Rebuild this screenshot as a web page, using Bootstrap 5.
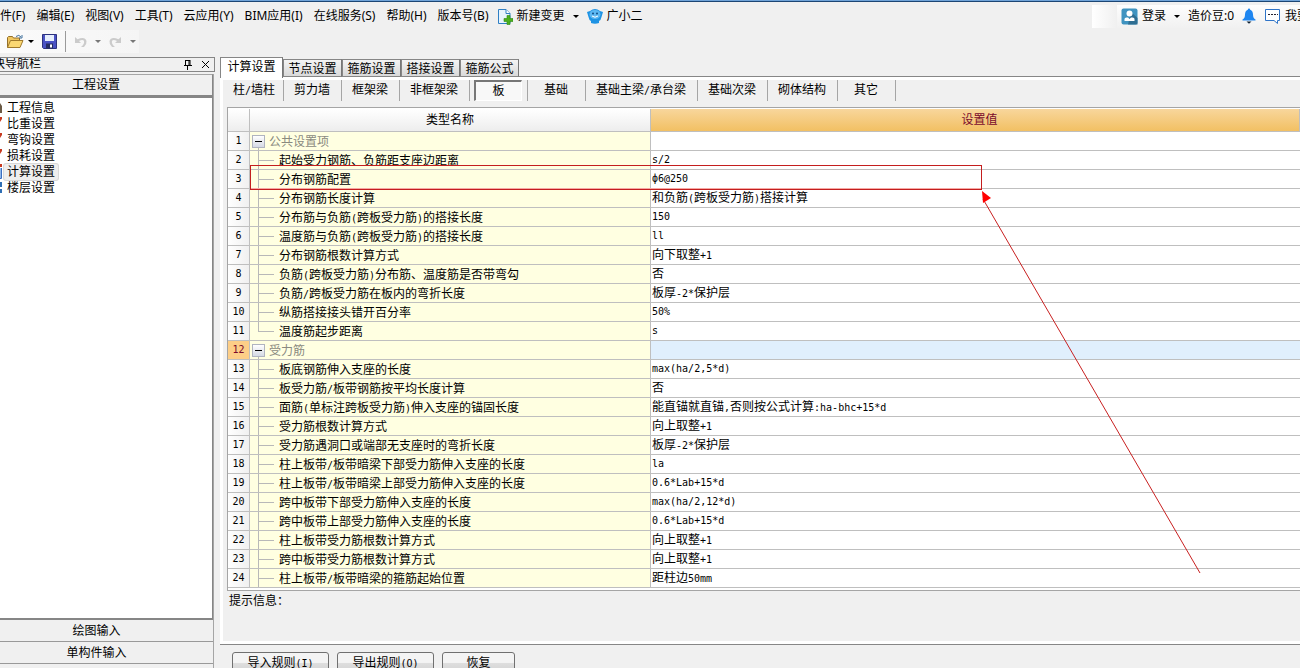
<!DOCTYPE html>
<html lang="zh-CN">
<head>
<meta charset="utf-8">
<meta name="viewport" content="width=device-width, initial-scale=1">
<title>计算设置</title>
<link href="https://cdn.jsdelivr.net/npm/bootstrap@5.3.0/dist/css/bootstrap.min.css" rel="stylesheet">
<style>
:root{--face:#f0f0f0;--line:#bfbfbf;--edge:#868686}
body{background:var(--face);color:#000;font:12px/18px "Liberation Sans","Noto Sans CJK SC",sans-serif;height:100vh;overflow:hidden}
button,.btn{font:inherit;color:inherit;border-radius:0}
.mo{font-family:"DejaVu Sans Mono",monospace;font-size:10px}
span.mo{line-height:0}
.top-strip{height:2px;background:#6fa3d8;border-bottom:1px solid #1c4674}
/* menu */
.menu-bar{height:28px;font-family:"Noto Sans","Noto Sans CJK SC",sans-serif}
.menu-bar a,.menu-bar button{color:#000;text-decoration:none;white-space:nowrap;background:none;border:0;padding:0}
.menu-items{gap:11px;margin-left:-12px}
.account{width:208px;height:23px;gap:4px;background:linear-gradient(#fdfdfd,#f1f1f1)}
.account-blank{width:25px;height:23px;background:linear-gradient(90deg,#fff,var(--face))}
.tri{display:inline-block;border:3px solid transparent;border-top-color:currentColor;border-bottom:0}
/* tool bar */
.tool-bar{height:23px;width:139px;padding-left:7px;background:linear-gradient(90deg,#fbfbfb,#f5f5f5)}
.tool-bar button{background:none;border:0;padding:0;line-height:0}
.tool-sep{width:1px;height:21px;background:#9a9a9a}
.off{color:#777}
/* navigation */
.side{width:220px;padding-right:5px}
.side-title{height:15px;margin-bottom:2px;border:1px solid var(--edge);border-left:0}
.side-title .caption{margin-left:-19px;line-height:13px}
.side-title button{background:none;border:0;padding:0;line-height:0}
.side-body{border-right:1px solid #a5a5a5;margin-right:1px}
.side-head{height:23px;background:var(--face);border:0;border-top:1px solid #a5a5a5;border-bottom:2px solid var(--edge);border-right:1px solid var(--edge);padding:0 20px 0 0}
.side-foot{height:22px;background:var(--face);border:0;border-bottom:1px solid #999;padding:0 20px 0 0}
.side-list{background:#fff;border:1px solid var(--edge);border-left:0;border-bottom-width:2px;padding-top:2px}
.side-list a{display:flex;align-items:center;height:16px;color:#000;text-decoration:none}
.side-list a span{padding:0 3px;line-height:16px}
.side-list a.current span{background:#eee;box-shadow:0 0 0 1px #d9d9d9;border-radius:2px}
.side-list svg{width:4px;height:16px}
/* tab page */
.page-tabs{padding-top:2px}
.page-tabs button{width:59px;height:18px;padding:0;background:linear-gradient(#f4f4f4,#d9d9d9);border:1px solid var(--edge);border-right-color:#777}
.page-tabs button.active{width:63px;height:21px;margin-top:-2px;margin-bottom:-2px;background:#fff;border-bottom:0;padding-bottom:2px;position:relative;z-index:1}
.page-tabs .rest{border-bottom:1px solid var(--edge)}
.page-body{border:3px solid #fff;border-right:0;background:var(--face);box-shadow:-1px 0 var(--edge),0 1px var(--edge)}
.kinds{padding:0 0 6px 3px}
.kinds>div{width:58px;height:21px;border-right:1px solid #a5a5a5;padding-right:1px}
.kinds>div.w70{width:70px}.kinds>div.w112{width:112px}
.kinds button{background:none;border:0;padding:0;white-space:nowrap;width:100%;height:21px;line-height:21px}
.kinds button.active{width:48px;height:21px;line-height:19px;margin:0 auto;border:1px solid #fff;border-top:2px solid #777;border-left:2px solid #777;background:#f8f8f8;display:block}
.sheet{border:1px solid #a5a5a5;border-right:0;margin-left:4px;padding:1px 0 2px;background:#fff}
.settings-table{border-collapse:separate;border-spacing:0;table-layout:fixed;color:#000;margin:0}
.settings-table th,.settings-table td{height:19px;padding:0;line-height:18px;font-weight:400;border:0;border-bottom:1px solid var(--line);border-right:1px solid var(--line);white-space:nowrap;vertical-align:top;box-shadow:none;overflow:hidden}
.settings-table thead th{height:23px;line-height:22px;text-align:center;background:linear-gradient(#fff,#ededed)}
.settings-table thead th.hot{background:linear-gradient(#f8d69c,#f2c063);color:#7a0a2c;padding-left:9px}
.settings-table tbody th{text-align:center;background:linear-gradient(90deg,#fff,#f0f0f0)}
.settings-table tbody .sel th{background:#fdce87;color:#7a0a2c}
.settings-table td{background:#fff;padding-left:1px;border-right:0}
.settings-table .sel td{background:#e0effd}
.settings-table td.leaf,.settings-table td.grp{border-right:1px solid var(--line);padding-top:2px;line-height:16px}
.settings-table td.leaf{padding-left:29px;background:linear-gradient(#b8b8b8,#b8b8b8) 8px 9px/16px 1px no-repeat,linear-gradient(#b8b8b8,#b8b8b8) 8px 0/1px 18px no-repeat,#ffffe1}
.settings-table td.leaf.end{background:linear-gradient(#b8b8b8,#b8b8b8) 8px 9px/16px 1px no-repeat,linear-gradient(#b8b8b8,#b8b8b8) 8px 0/1px 9px no-repeat,#ffffe1}
.settings-table td.grp{padding-left:2px;color:#8a8a80;background:linear-gradient(#b8b8b8,#b8b8b8) 8px 15px/1px 3px no-repeat,#ffffe1}
.fold{width:13px;height:13px;padding:0;border:1px solid #b0b4c0;background:linear-gradient(#000,#000) 2px 5px/7px 1px no-repeat,linear-gradient(#fff,#d5d9e4);vertical-align:top;margin:1px 4px 0 0}
/* markup laid over the table */
.note{position:absolute;left:27px;top:58px;pointer-events:none}
.hint{padding:1px 6px}
.actions{height:24px;gap:8px;padding:8px 12px 0;overflow:hidden}
.actions button{height:23px;width:97px;flex:none;padding:0;border:1px solid #707070;border-radius:3px;background:linear-gradient(#f4f4f4 0 45%,#dedede 50%,#d0d0d0);line-height:21px}
.actions button.short{width:73px}
</style>
</head>
<body class="d-flex flex-column">
<div class="top-strip flex-shrink-0"></div>
<nav class="menu-bar d-flex align-items-center flex-shrink-0" aria-label="菜单">
  <div class="menu-items d-flex align-items-center">
    <a href="#">文件(F)</a><a href="#">编辑(E)</a><a href="#">视图(V)</a><a href="#">工具(T)</a><a href="#">云应用(Y)</a><a href="#">BIM应用(I)</a><a href="#">在线服务(S)</a><a href="#">帮助(H)</a><a href="#">版本号(B)</a>
  </div>
  <button type="button" class="d-flex align-items-center ms-2">
    <svg width="16" height="17" viewBox="0 0 16 17"><path d="M1.5 1.5h7.500l4 4v10h-11.500z" fill="#e8f4fd" stroke="#2f7fc4"/><path d="M9 1.500v4h4" fill="#fff" stroke="#2f7fc4"/><path d="M9 8h3v3h3v3h-3v3h-3v-3h-3v-3h3z" fill="#4caf1e" stroke="#2c8a12" stroke-width=".6" transform="translate(1 -.5)"/></svg>
    <span class="ms-1">新建变更</span><i class="tri ms-2"></i>
  </button>
  <a href="#" class="d-flex align-items-center ms-2">
    <svg width="16" height="16" viewBox="0 0 16 16"><path d="M3 3q5-4 10 0l3 1-1.500 5q-.5 3-2.500 4v2q-4 1.500-8 0v-2q-2-1-2.500-4L0 4z" fill="#1e93e4"/><ellipse cx="8" cy="6.500" rx="5.500" ry="4.500" fill="#5db8f2"/><circle cx="6" cy="5.500" r="1" fill="#114d86"/><circle cx="10" cy="5.500" r="1" fill="#114d86"/><path d="M5 8q3 2.500 6 0" stroke="#fff" fill="none"/></svg>
    <span class="ms-1">广小二</span>
  </a>
  <div class="account d-flex align-items-center ms-auto overflow-hidden">
    <span class="account-blank flex-shrink-0"></span>
    <button type="button" class="d-flex align-items-center flex-shrink-0">
      <svg width="17" height="17" viewBox="0 0 17 17"><rect x=".5" y=".5" width="16" height="16" rx="2" fill="#3f93c0"/><path d="M10 4l6.500 6v6.500H7z" fill="#2f6e92"/><circle cx="8.500" cy="5.500" r="3" fill="#fff"/><path d="M3.500 13V11q0-1.500 2-1.500h1.500l1.500 1.500 1.500-1.500h1.500q2 0 2 1.500v2z" fill="#fff"/></svg>
      <span class="ms-1">登录</span><i class="tri ms-2"></i>
    </button>
    <a href="#" class="ms-1">造价豆:0</a>
    <a href="#" class="mx-1 flex-shrink-0 lh-1" aria-label="通知"><svg width="14" height="16" viewBox="0 0 14 16"><path d="M7 .5q1 0 1.200 1.200Q11 3 11 6.500q0 4 2.500 5v1H.5v-1q2.500-1 2.500-5Q3 3 5.800 1.700 6 .5 7 .5z" fill="#1e86f0"/><path d="M4.500 13.500h5L7 15.800z" fill="#123"/></svg></a>
    <a href="#" class="d-flex align-items-center flex-shrink-0"><svg width="17" height="17" viewBox="0 0 17 17"><path d="M1.500 1.500h14v11h-2v3l-3.500-3h-8.500z" fill="#fff" stroke="#2f74c8"/><path d="M4 6.500h10" stroke="#223" stroke-dasharray="2 1"/></svg><span class="ms-1">我要</span></a>
  </div>
</nav>
<div class="tool-bar d-flex align-items-center flex-shrink-0">
  <button type="button" class="d-flex align-items-center" aria-label="打开">
    <svg width="17" height="15" viewBox="0 0 17 15"><path d="M.5 13.500v-10l1-1h4l1 1.500h6v3" fill="#f0c660" stroke="#94702a"/><path d="M.5 13.500l3-7h12.500l-3 7z" fill="#fbd873" stroke="#a07a2c"/><path d="M9 2.500q3-2.500 5 .5m1-2v3h-3" fill="none" stroke="#41709c"/></svg>
    <i class="tri ms-1 me-2"></i>
  </button>
  <button type="button" aria-label="保存"><svg width="15" height="15" viewBox="0 0 15 15"><path d="M.5.500h14v14h-13l-1-1z" fill="#4a52c4" stroke="#2c327e"/><path d="M3 1h9v6H3z" fill="#e6eefc"/><path d="M4 9.500h7v5H4z" fill="#252c60"/><path d="M8 10.500h2v3H8z" fill="#fff"/></svg></button>
  <span class="tool-sep ms-2 me-2"></span>
  <button type="button" class="d-flex align-items-center off" aria-label="撤销"><svg width="13" height="12" viewBox="0 0 13 12"><path d="M1 1v6h6L5 5q4-2 5 0 .8 3-3 6h3q3-3 2.500-6Q11 0 3.500 3.200z" fill="#cbcbcb"/></svg><i class="tri ms-2"></i></button>
  <button type="button" class="d-flex align-items-center off ms-2" aria-label="重做"><svg width="13" height="12" viewBox="0 0 13 12"><path d="M12 1v6H6l2-2Q4 3 3 5q-.8 3 3 6H3Q0 8 .5 5 2 0 9.500 3.200z" fill="#cbcbcb"/></svg><i class="tri ms-2"></i></button>
</div>

<div class="d-flex flex-grow-1 overflow-hidden pt-1">
  <aside class="side d-flex flex-column flex-shrink-0">
    <div class="side-title d-flex align-items-center overflow-hidden flex-shrink-0">
      <span class="caption me-auto">模块导航栏</span>
      <button type="button" class="me-2" aria-label="固定"><svg width="11" height="11" viewBox="0 0 11 11"><path d="M3.500 1v5M3 1.500h5M7 1v5M8 1v5M2 6.500h8M5.500 7v4" stroke="#000" fill="none"/></svg></button>
      <button type="button" class="me-1" aria-label="关闭"><svg width="9" height="9" viewBox="0 0 9 9"><path d="M1 1l7 7M8 1L1 8" stroke="#000" fill="none"/></svg></button>
    </div>
    <div class="side-body d-flex flex-column flex-grow-1">
      <button type="button" class="side-head">工程设置</button>
      <nav class="side-list flex-grow-1" aria-label="工程设置">
        <a href="#"><svg viewBox="0 0 4 16"><path d="M0 3l2 3v7H0z" fill="#6b5a45"/></svg><span>工程信息</span></a>
        <a href="#"><svg viewBox="0 0 4 16"><path d="M0 1h2v2L0 6z" fill="#c63a20"/></svg><span>比重设置</span></a>
        <a href="#"><svg viewBox="0 0 4 16"><path d="M0 1h2v2L0 6z" fill="#c63a20"/></svg><span>弯钩设置</span></a>
        <a href="#"><svg viewBox="0 0 4 16"><path d="M0 1h2v2L0 6z" fill="#c63a20"/></svg><span>损耗设置</span></a>
        <a href="#" class="current"><svg viewBox="0 0 4 16"><path d="M0 4h2v10H0z" fill="#8fb7ea"/><path d="M0 0h2v3H0z" fill="#c63a20"/><path d="M1.500 4v10.500H0" stroke="#3b6fc0" fill="none"/></svg><span>计算设置</span></a>
        <a href="#"><svg viewBox="0 0 4 16"><path d="M0 2h2v5H0zM0 9h2v4H0z" fill="#2f6fb4"/></svg><span>楼层设置</span></a>
      </nav>
      <button type="button" class="side-foot">绘图输入</button>
      <button type="button" class="side-foot">单构件输入</button>
      <div class="pt-1"></div>
    </div>
  </aside>

  <main class="flex-grow-1 d-flex flex-column overflow-hidden">
    <div class="page-tabs d-flex flex-shrink-0" role="tablist">
      <button type="button" role="tab" class="active">计算设置</button><button type="button" role="tab">节点设置</button><button type="button" role="tab">箍筋设置</button><button type="button" role="tab">搭接设置</button><button type="button" role="tab">箍筋公式</button><span class="rest flex-grow-1"></span>
    </div>
    <section class="page-body flex-grow-1 d-flex flex-column">
      <div class="kinds d-flex text-center">
        <div><button type="button">柱<span class="mo">/</span>墙柱</button></div><div><button type="button">剪力墙</button></div><div><button type="button">框架梁</button></div><div class="w70"><button type="button">非框架梁</button></div><div><button type="button" class="active">板</button></div><div><button type="button">基础</button></div><div class="w112"><button type="button">基础主梁<span class="mo">/</span>承台梁</button></div><div class="w70"><button type="button">基础次梁</button></div><div class="w70"><button type="button">砌体结构</button></div><div><button type="button">其它</button></div>
      </div>
      <div class="position-relative">
      <div class="sheet">
      <table class="table settings-table w-100">
        <colgroup><col style="width:22px"><col style="width:401px"><col></colgroup>
        <thead><tr><th></th><th scope="col">类型名称</th><th scope="col" class="hot">设置值</th></tr></thead>
        <tbody>
        <tr><th class="mo">1</th><td class="grp"><button type="button" class="fold" aria-label="折叠"></button>公共设置项</td><td></td></tr>
        <tr><th class="mo">2</th><td class="leaf">起始受力钢筋、负筋距支座边距离</td><td class="mo">s/2</td></tr>
        <tr><th class="mo">3</th><td class="leaf">分布钢筋配置</td><td class="mo">ф6@250</td></tr>
        <tr><th class="mo">4</th><td class="leaf">分布钢筋长度计算</td><td>和负筋<span class="mo">(</span>跨板受力筋<span class="mo">)</span>搭接计算</td></tr>
        <tr><th class="mo">5</th><td class="leaf">分布筋与负筋<span class="mo">(</span>跨板受力筋<span class="mo">)</span>的搭接长度</td><td class="mo">150</td></tr>
        <tr><th class="mo">6</th><td class="leaf">温度筋与负筋<span class="mo">(</span>跨板受力筋<span class="mo">)</span>的搭接长度</td><td class="mo">ll</td></tr>
        <tr><th class="mo">7</th><td class="leaf">分布钢筋根数计算方式</td><td>向下取整<span class="mo">+1</span></td></tr>
        <tr><th class="mo">8</th><td class="leaf">负筋<span class="mo">(</span>跨板受力筋<span class="mo">)</span>分布筋、温度筋是否带弯勾</td><td>否</td></tr>
        <tr><th class="mo">9</th><td class="leaf">负筋<span class="mo">/</span>跨板受力筋在板内的弯折长度</td><td>板厚<span class="mo">-2*</span>保护层</td></tr>
        <tr><th class="mo">10</th><td class="leaf">纵筋搭接接头错开百分率</td><td class="mo">50%</td></tr>
        <tr><th class="mo">11</th><td class="leaf end">温度筋起步距离</td><td class="mo">s</td></tr>
        <tr class="sel"><th class="mo">12</th><td class="grp"><button type="button" class="fold" aria-label="折叠"></button>受力筋</td><td></td></tr>
        <tr><th class="mo">13</th><td class="leaf">板底钢筋伸入支座的长度</td><td class="mo">max(ha/2,5*d)</td></tr>
        <tr><th class="mo">14</th><td class="leaf">板受力筋<span class="mo">/</span>板带钢筋按平均长度计算</td><td>否</td></tr>
        <tr><th class="mo">15</th><td class="leaf">面筋<span class="mo">(</span>单标注跨板受力筋<span class="mo">)</span>伸入支座的锚固长度</td><td>能直锚就直锚<span class="mo">,</span>否则按公式计算<span class="mo">:ha-bhc+15*d</span></td></tr>
        <tr><th class="mo">16</th><td class="leaf">受力筋根数计算方式</td><td>向上取整<span class="mo">+1</span></td></tr>
        <tr><th class="mo">17</th><td class="leaf">受力筋遇洞口或端部无支座时的弯折长度</td><td>板厚<span class="mo">-2*</span>保护层</td></tr>
        <tr><th class="mo">18</th><td class="leaf">柱上板带<span class="mo">/</span>板带暗梁下部受力筋伸入支座的长度</td><td class="mo">la</td></tr>
        <tr><th class="mo">19</th><td class="leaf">柱上板带<span class="mo">/</span>板带暗梁上部受力筋伸入支座的长度</td><td class="mo">0.6*Lab+15*d</td></tr>
        <tr><th class="mo">20</th><td class="leaf">跨中板带下部受力筋伸入支座的长度</td><td class="mo">max(ha/2,12*d)</td></tr>
        <tr><th class="mo">21</th><td class="leaf">跨中板带上部受力筋伸入支座的长度</td><td class="mo">0.6*Lab+15*d</td></tr>
        <tr><th class="mo">22</th><td class="leaf">柱上板带受力筋根数计算方式</td><td>向上取整<span class="mo">+1</span></td></tr>
        <tr><th class="mo">23</th><td class="leaf">跨中板带受力筋根数计算方式</td><td>向上取整<span class="mo">+1</span></td></tr>
        <tr><th class="mo">24</th><td class="leaf">柱上板带<span class="mo">/</span>板带暗梁的箍筋起始位置</td><td>距柱边<span class="mo">50mm</span></td></tr>
        </tbody>
      </table>
      </div>
      <svg class="note" width="960" height="412" viewBox="0 0 960 412"><path d="M1 23.500h730" stroke="#f6a8a4"/><rect x=".5" y=".5" width="731" height="24" fill="none" stroke="#c41e1e"/><path d="M733 34L950 408" stroke="#c82020"/><path d="M732 26l9 7-8 5z" fill="#f00"/></svg>
      </div>
      <div class="hint">提示信息：</div>
    </section>
    <div class="actions d-flex flex-shrink-0">
      <button type="button">导入规则<span class="mo">(I)</span></button><button type="button">导出规则<span class="mo">(O)</span></button><button type="button" class="short">恢复</button>
    </div>
  </main>
</div>
<script src="https://cdn.jsdelivr.net/npm/bootstrap@5.3.0/dist/js/bootstrap.bundle.min.js"></script>
</body>
</html>
